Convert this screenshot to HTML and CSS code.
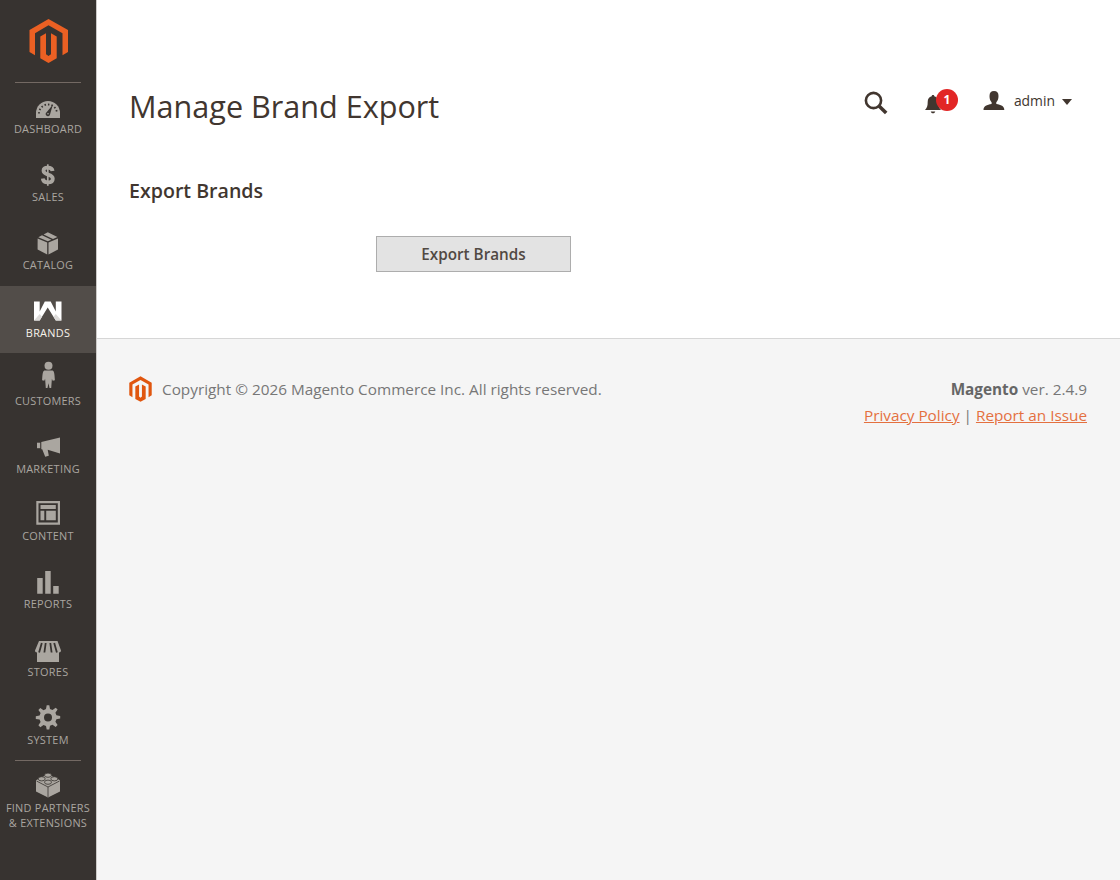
FILE: index.html
```html
<!DOCTYPE html>
<html lang="en">
<head>
    <meta charset="UTF-8">
    <meta name="viewport" content="width=device-width, initial-scale=1.0">
    <title>Manage Brand Export</title>
    <link rel="stylesheet" href="styles.css">
</head>
<body>
    <div class="sidebar">
        <a class="logo" href="#">
            <svg width="40" height="44" viewBox="0 0 40 44">
                <path d="M19.500 0 39 11v22l-5.500 3.200V14.300L19.500 6.300 6 14.300v21.900L.5 33V11z"/>
                <path d="M11.300 17.500 17 14.300v20.900l2.500 1.800 2.500-1.800V14.300l5.700 3.200v21.700L19.500 44l-8.200-4.800z"/>
            </svg>
        </a>
        <ul class="menu">
            <li class="first">
                <a href="#">
                    <svg viewBox="0 0 32 32">
                        <path d="M4 29v-5a12 12 0 0 1 24 0v5z"/>
                        <path class="cut-line dots" d="M7 24.5a9 9 0 0 1 18 0"/>
                        <path class="cut" d="M20.8 15.8 18 25.4a2.2 2.2 0 1 1-3.4-2.2z"/>
                        <circle cx="16" cy="24.8" r=".8"/>
                    </svg>
                    <span>Dashboard</span>
                </a>
            </li>
            <li>
                <a href="#">
                    <svg viewBox="0 0 32 32">
                        <path class="line dollar" d="M20.600 14c-.3-2.200-1.900-3.400-4.800-3.400-2.700 0-4.300 1.200-4.300 3.200 0 4.900 9.300 2.700 9.300 7.900 0 2.400-1.900 3.700-4.900 3.700-3.100 0-4.900-1.400-5.100-3.900"/>
                        <path class="line" stroke-width="1.700" d="M15.800 7.300v21.500"/>
                    </svg>
                    <span>Sales</span>
                </a>
            </li>
            <li>
                <a href="#">
                    <svg viewBox="0 0 32 32">
                        <path d="M5.600 13.600 15.200 17.600v11.800L5.600 24.500z"/>
                        <path d="M26 13.600 16.500 17.600v11.800L26 24.500z"/>
                        <path d="M6.300 12.200 10 10.300 19.400 14.700l-3.600 1.600z"/>
                        <path d="M11.600 9.400 15.800 7.300 25.400 12l-4.400 2z"/>
                    </svg>
                    <span>Catalog</span>
                </a>
            </li>
            <li class="active">
                <a href="#">
                    <svg viewBox="0 0 32 32">
                        <path d="M2 8.500h5.700v10L12.800 8.500h5.900l5.100 10v-10h5.700v19h-5.700L15.700 14.500 7.700 27.500H2z"/>
                        <path class="shade" d="m2 27.500 5.700-6.500 2.300 2.800-2.300 3.700zM29.500 27.500 23.800 21l-2.300 2.800 2.300 3.700z"/>
                    </svg>
                    <span>Brands</span>
                </a>
            </li>
            <li>
                <a href="#">
                    <svg viewBox="0 0 32 32">
                        <circle cx="16.500" cy="5.800" r="4"/>
                        <path d="M13 10.400h7c2 0 2.500 2 2.900 9.800l-2.200.6-.8-2-.7 9.200h-1.700L16.500 23.200l-1 4.800h-1.700l-.7-9.200-.8 2-2.200-.6c.4-7.800.9-9.800 2.900-9.800z"/>
                    </svg>
                    <span>Customers</span>
                </a>
            </li>
            <li>
                <a href="#">
                    <svg viewBox="0 0 32 32">
                        <path d="M5 14.700h3.200v5.500H5z"/>
                        <path d="M9.300 14 28 9.400v16l-12.300-3.600 1.100 6-3.600.9-3-7.500h-.9z"/>
                    </svg>
                    <span>Marketing</span>
                </a>
            </li>
            <li>
                <a href="#">
                    <svg viewBox="0 0 32 32">
                        <path fill-rule="evenodd" d="M4.300 5H28v23.700H4.300zm2.200 2.200v19.300h19.300V7.200z"/>
                        <path d="M8.500 9h15.300v4H8.500zM8.500 14.800h3.800v9.500H8.500zM14.200 14.800h9.600v9.500h-9.600z"/>
                    </svg>
                    <span>Content</span>
                </a>
            </li>
            <li>
                <a href="#">
                    <svg viewBox="0 0 32 32">
                        <path d="M5.200 14h5.500v15.700H5.200zM13.200 7h5.500v22.700h-5.500zM21.200 22h5.500v7.700h-5.500z"/>
                    </svg>
                    <span>Reports</span>
                </a>
            </li>
            <li>
                <a href="#">
                    <svg viewBox="0 0 32 32">
                        <path d="M7 9h18.500l3.500 9.500c0 1.300-.8 2-2 2V30H5v-9.500c-1.300 0-2-.7-2-2z"/>
                        <path class="cut-line" stroke-width="1.800" d="m9.800 11-2.700 9.500M13.700 11l-1.300 9.500M18.300 11l1.300 9.500M22.200 11l2.700 9.500"/>
                    </svg>
                    <span>Stores</span>
                </a>
            </li>
            <li>
                <a href="#">
                    <svg viewBox="0 0 32 32">
                        <path fill-rule="evenodd" d="m14 9 .7-3.700h2.600L18 9l2.500 1 3.200-2.300 1.900 1.900-2.200 3.200 1 2.500 3.800.7v2.600l-3.800.7-1 2.500 2.200 3.200-1.900 1.900-3.200-2.200-2.500 1-.7 3.800h-2.600L14 26l-2.500-1-3.200 2.200-1.900-1.900 2.200-3.200-1-2.500-3.800-.7v-2.600l3.800-.7 1-2.500-2.200-3.200 1.900-1.900 3.200 2.300zm2 4.600a4 4 0 1 0 0 8 4 4 0 0 0 0-8z"/>
                    </svg>
                    <span>System</span>
                </a>
            </li>
            <li class="partners">
                <a href="#">
                    <svg viewBox="0 0 32 32">
                        <path d="M4 12.200 16 6l12 6.200v11.300l-12 6-12-6z"/>
                        <path class="cut-line" stroke-width=".8" d="m4.500 13 11.500 6 11.500-6M16 19v10"/>
                        <g class="studs">
                            <ellipse cx="16" cy="7.200" rx="3.500" ry="2.100"/>
                            <ellipse cx="9.700" cy="10.800" rx="3.500" ry="2.100"/>
                            <ellipse cx="22.300" cy="10.800" rx="3.500" ry="2.100"/>
                            <ellipse cx="16" cy="14.200" rx="3.500" ry="2.100"/>
                        </g>
                    </svg>
                    <span>Find Partners<br>&amp; Extensions</span>
                </a>
            </li>
        </ul>
    </div>

    <div class="page-wrapper">
        <div class="page-header">
            <h1>Manage Brand Export</h1>
            <div class="header-tools">
                <svg class="search" width="24" height="24" viewBox="0 0 24 24">
                    <circle cx="9.500" cy="9.500" r="7.600"/>
                    <path d="m15 15 7.200 7"/>
                </svg>
                <a class="notifications" href="#">
                    <svg width="18" height="20" viewBox="0 0 18 20">
                        <path d="M9 1c.9 0 1.300.5 1.300 1.300 2.700.7 4 2.500 4 5.500 0 4 .5 6 2.700 8.200H1c2.200-2.200 2.700-4.200 2.700-8.200 0-3 1.300-4.800 4-5.500C7.700 1.500 8.100 1 9 1zM6.700 17.500h4.600c-.5 1.300-1.300 1.800-2.300 1.800s-1.800-.5-2.300-1.800z"/>
                    </svg>
                    <span class="badge">1</span>
                </a>
                <a class="account" href="#">
                    <svg width="22" height="20" viewBox="0 0 22 20">
                        <path d="M11 0c3 0 4.500 1.700 4.500 5 0 2.800-.8 4.900-2.200 6.300v1.600c4.600 1 8 1.600 8 6.100H.500c0-4.500 3.500-5.100 8.100-6.100v-1.600C7.200 9.900 6.500 7.800 6.500 5c0-3.300 1.500-5 4.500-5z"/>
                    </svg>
                    <span>admin</span>
                    <i class="caret"></i>
                </a>
            </div>
        </div>

        <div class="page-content">
            <h2>Export Brands</h2>
            <button class="export-btn">Export Brands</button>
        </div>

        <div class="footer">
            <div class="copyright">
                <svg width="23" height="26" viewBox="0 0 40 44">
                    <path d="M20 0 39.500 11v22l-5.500 3.200V14.300L20 6.300 6 14.300v21.900L.500 33V11z"/>
                    <path d="M11 17.500 17.500 14v21.200l2.500 1.800 2.500-1.800V14l6.500 3.500v21.700L20 44l-9-4.800z"/>
                </svg>
                <span>Copyright © 2026 Magento Commerce Inc. All rights reserved.</span>
            </div>
            <div class="footer-legal">
                <p><strong>Magento</strong> ver. 2.4.9</p>
                <p><a href="#">Privacy Policy</a> | <a href="#">Report an Issue</a></p>
            </div>
        </div>
    </div>
</body>
</html>
```

FILE: styles.css
```css
* {
    box-sizing: border-box;
}
body {
    margin: 0;
    display: flex;
    height: 880px;
    overflow: hidden;
    background-color: #f5f5f5;
    color: #41362f;
    font-family: "Open Sans", "Noto Sans", sans-serif;
    font-size: 15.32px;
}
a {
    color: inherit;
    text-decoration: none;
}

/* Sidebar */
.sidebar {
    flex: none;
    width: 97px;
    background-color: #373330;
    border-right: 1px solid #cccac8;
}
.logo {
    display: flex;
    justify-content: center;
    height: 82px;
    padding-top: 19px;
    padding-left: 1px;
}
.logo svg {
    fill: #eb6023;
}
.menu {
    list-style: none;
    margin: 0;
    padding: 0;
}
.menu li {
    position: relative;
    height: 67.87px;
}
.menu .first::before,
.menu .partners::before {
    content: "";
    position: absolute;
    top: 0;
    left: 15px;
    right: 15px;
    border-top: 1px solid #736963;
}
.menu .partners::before {
    top: -0.5px;
}
.menu a {
    display: flex;
    flex-direction: column;
    align-items: center;
    height: 100%;
    padding-top: 7px;
    color: #aaa6a0;
    font-size: 10.9px;
    line-height: 15px;
    letter-spacing: 0.27px;
    text-align: center;
    text-transform: uppercase;
}
.menu span {
    margin-top: 0.27px;
    white-space: nowrap;
}
.menu svg {
    flex: none;
    width: 32px;
    height: 32px;
    fill: #aaa6a0;
}
.menu .line {
    fill: none;
    stroke: #aaa6a0;
}
.menu .dollar {
    stroke-width: 3.8;
}
.menu .cut {
    fill: #373330;
}
.menu .cut-line {
    fill: none;
    stroke: #373330;
}
.menu .dots {
    stroke-width: 1.8;
    stroke-dasharray: 1.5 2;
}
.menu .studs {
    fill: #aaa6a0;
    stroke: #373330;
    stroke-width: 0.8;
}
.menu .active a {
    background-color: #524d49;
    color: #f7f3eb;
}
.menu .active svg {
    fill: #fff;
}
.menu .active .shade {
    fill: #dddbd9;
}

/* Page */
.page-wrapper {
    flex: 1;
    display: flex;
    flex-direction: column;
}
.page-header {
    display: flex;
    justify-content: space-between;
    height: 158px;
    padding: 85px 48px 0 32px;
    background-color: #fff;
}
.page-header h1 {
    margin: 0;
    font-size: 30.6px;
    font-weight: 400;
    line-height: 42px;
}
.header-tools {
    display: flex;
    align-items: flex-start;
}
.search {
    margin-top: 6px;
    fill: none;
    stroke: #41362f;
    stroke-width: 2.6;
}
.search path {
    stroke-width: 3.6;
}
.notifications {
    position: relative;
    margin: 9px 0 0 36px;
}
.notifications svg,
.account svg {
    display: block;
    fill: #41362f;
}
.badge {
    position: absolute;
    top: -5px;
    left: 12px;
    width: 22px;
    height: 22px;
    border-radius: 50%;
    background-color: #e22626;
    color: #fff;
    font-size: 12px;
    font-weight: 700;
    line-height: 22px;
    text-align: center;
}
.account {
    display: flex;
    align-items: center;
    margin: 6px 0 0 41px;
    font-size: 13.9px;
    line-height: 20px;
}
.account span {
    margin-left: 9px;
}
.caret {
    margin: 2px 0 0 7px;
    border: 5px solid transparent;
    border-top: 6px solid #41362f;
    border-bottom: 0;
}
.page-content {
    height: 181px;
    padding: 18px 32px 0;
    background-color: #fff;
    border-bottom: 1px solid #d6d6d6;
}
.page-content h2 {
    margin: 0;
    font-size: 19.6px;
    font-weight: 600;
    line-height: 30px;
}
.export-btn {
    display: block;
    width: 195px;
    height: 36px;
    margin: 30px 0 0 247px;
    padding: 0;
    border: 1px solid #adadad;
    background-color: #e3e3e3;
    color: #514943;
    font-family: inherit;
    font-size: 15.26px;
    font-weight: 600;
}

/* Footer */
.footer {
    display: flex;
    justify-content: space-between;
    padding: 37px 33px 0 32px;
    color: #777;
    line-height: 26px;
}
.copyright {
    display: flex;
}
.copyright svg {
    margin-right: 10px;
    fill: #e0560f;
}
.footer-legal {
    text-align: right;
}
.footer-legal p {
    margin: 0;
}
.footer-legal strong {
    color: #666;
}
.footer-legal a {
    color: #e4703f;
    text-decoration: underline;
}
```
